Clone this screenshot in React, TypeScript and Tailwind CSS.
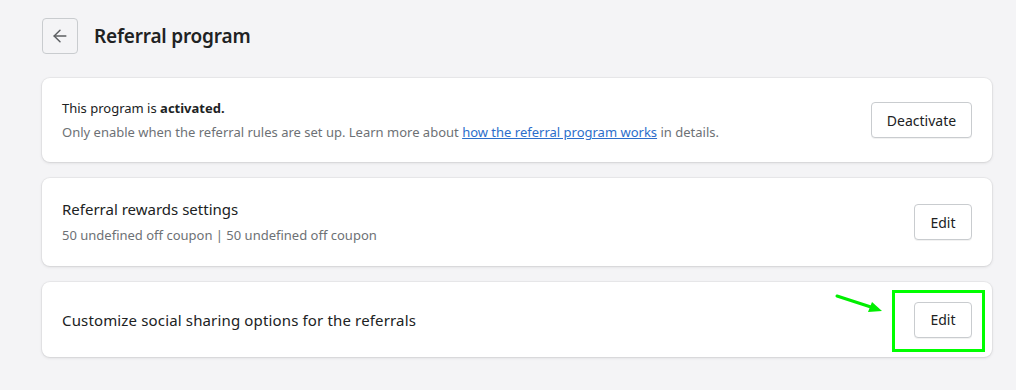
import { ArrowLeft } from "lucide-react";

export default function App() {
  return (
    <div className="min-h-screen w-[1016px] h-[390px] bg-[#f4f4f6] text-[#202223] font-['Noto_Sans',sans-serif]">
      <div className="pl-[42px] pr-[24px] pt-[18px]">
        {/* header */}
        <div className="flex items-center gap-4">
          <button className="w-9 h-9 flex items-center justify-center rounded border border-[#c9cccf] bg-transparent text-[#5c5f62]">
            <ArrowLeft size={20} strokeWidth={1.75} />
          </button>
          <h1 className="text-[19px] font-semibold tracking-[-0.2px] leading-none text-[#202223]">Referral program</h1>
        </div>

        <div className="mt-6 flex flex-col gap-4">
          {/* status card */}
          <div className="bg-white rounded-lg shadow-[0_0_0_1px_rgba(63,63,68,0.05),0_1px_3px_0_rgba(63,63,68,0.15)] h-[84px] px-5 flex items-center justify-between">
            <div>
              <p className="text-[13px] leading-5 text-[#202223]">
                This program is <span className="font-bold">activated.</span>
              </p>
              <p className="text-[13px] leading-5 mt-1 text-[#6d7175]">
                Only enable when the referral rules are set up. Learn more about{" "}
                <a href="#" className="text-[#2c6ecb] underline">how the referral program works</a> in details.
              </p>
            </div>
            <button className="h-9 w-[101px] rounded border border-[#c9cccf] bg-white text-[14px] text-[#202223] shadow-[0_1px_0_rgba(0,0,0,0.05)]">
              Deactivate
            </button>
          </div>

          {/* rewards card */}
          <div className="bg-white rounded-lg shadow-[0_0_0_1px_rgba(63,63,68,0.05),0_1px_3px_0_rgba(63,63,68,0.15)] h-[88px] px-5 flex items-center justify-between">
            <div>
              <p className="text-[15px] leading-5 text-[#202223]">Referral rewards settings</p>
              <p className="text-[13px] leading-5 mt-1.5 text-[#6d7175]">
                50 undefined off coupon | 50 undefined off coupon
              </p>
            </div>
            <button className="h-9 w-[58px] rounded border border-[#c9cccf] bg-white text-[14px] text-[#202223] shadow-[0_1px_0_rgba(0,0,0,0.05)]">
              Edit
            </button>
          </div>

          {/* social sharing card */}
          <div className="relative bg-white rounded-lg shadow-[0_0_0_1px_rgba(63,63,68,0.05),0_1px_3px_0_rgba(63,63,68,0.15)] h-[75px] px-5 flex items-center justify-between">
            <p className="text-[15px] tracking-[0.15px] leading-5 text-[#202223]">Customize social sharing options for the referrals</p>
            <button className="relative h-9 w-[58px] rounded border border-[#c9cccf] bg-white text-[14px] text-[#202223] shadow-[0_1px_0_rgba(0,0,0,0.05)]">
              Edit
            </button>
            {/* annotation */}
            <div className="absolute left-[850px] top-[8px] w-[93px] h-[62px] border-[3px] border-[#00ff00] pointer-events-none" />
            <svg className="absolute left-[792px] top-[10px] pointer-events-none" width="52" height="22" viewBox="0 0 52 22">
              <line x1="3" y1="4" x2="40" y2="16" stroke="#00ee00" strokeWidth="3" strokeLinecap="round" />
              <polygon points="48,19 34,20 38,10" fill="#00ee00" />
            </svg>
          </div>
        </div>
      </div>
    </div>
  );
}
